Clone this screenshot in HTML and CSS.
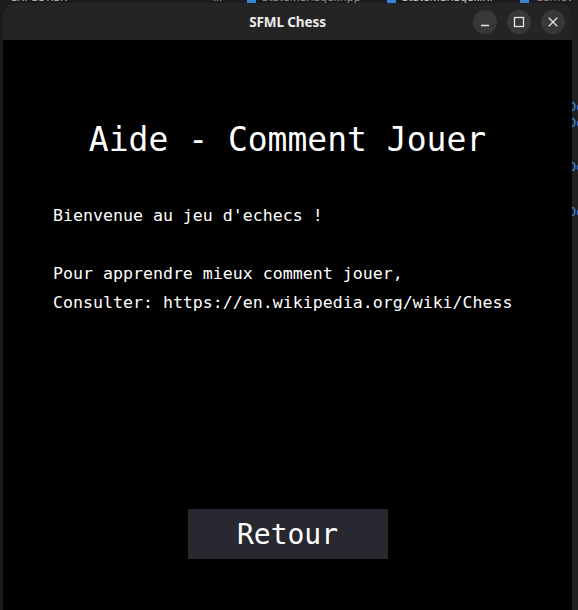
FILE: index.html
```html
<!DOCTYPE html>
<html lang="fr">
<head>
<meta charset="utf-8">
<title>SFML Chess</title>
<link rel="stylesheet" href="styles.css">
</head>
<body>
<div class="desktop">
  <div class="bg-tabs">
    <span class="bg-explorer">EXPLORER</span>
    <span class="bg-dots">...</span>
    <span class="bg-tab bg-tab1"><i class="bg-ico"></i>StateManager.hpp</span>
    <span class="bg-tab bg-tab2"><i class="bg-ico"></i>StateManager.inl</span>
    <span class="bg-close">×</span>
    <span class="bg-tab bg-tab3"><i class="bg-ico"></i>GameOver</span>
  </div>
  <div class="bg-code">
    <span class="bg-kw bg-kw1">Do</span>
    <span class="bg-kw bg-kw2">Do</span>
    <span class="bg-kw bg-kw3">Do</span>
    <span class="bg-kw bg-kw4">Do</span>
  </div>
  <div class="window">
    <header class="titlebar">
      <span class="title">SFML Chess</span>
      <div class="controls">
        <span class="ctl">
          <svg width="12" height="12" viewBox="0 0 12 12"><path d="M2 9.5h8" stroke="#e6e6e6" stroke-width="1.3" fill="none"/></svg>
        </span>
        <span class="ctl">
          <svg width="12" height="12" viewBox="0 0 12 12"><rect x="1.5" y="1.5" width="9" height="9" stroke="#e6e6e6" stroke-width="1.3" fill="none"/></svg>
        </span>
        <span class="ctl">
          <svg width="12" height="12" viewBox="0 0 12 12"><path d="M1.8 1.8l8.4 8.4M10.2 1.8l-8.4 8.4" stroke="#e6e6e6" stroke-width="1.3" fill="none"/></svg>
        </span>
      </div>
    </header>
    <main class="content">
      <h1 class="heading">Aide - Comment Jouer</h1>
      <div class="text">
        <p class="line">Bienvenue au jeu d'echecs !</p>
        <p class="line">&nbsp;</p>
        <p class="line">Pour apprendre mieux comment jouer,</p>
        <p class="line">Consulter: https://en.wikipedia.org/wiki/Chess</p>
      </div>
      <div class="btn-row">
        <button class="btn">Retour</button>
      </div>
    </main>
  </div>
</div>
</body>
</html>
```

FILE: styles.css
```css
* { box-sizing: border-box; }
html, body {
  margin: 0;
  padding: 0;
  width: 578px;
  height: 610px;
  overflow: hidden;
  background: #1b1b1b;
}
.desktop {
  position: relative;
  width: 578px;
  height: 610px;
  overflow: hidden;
  background: #1b1b1b;
}
.bg-tabs {
  position: absolute;
  left: 0;
  top: -10px;
  width: 578px;
  height: 14px;
  font-family: "Noto Sans", sans-serif;
  font-size: 11.5px;
  line-height: 14px;
  color: #8a8a8a;
}
.bg-tabs span { position: absolute; top: 0; white-space: nowrap; }
.bg-explorer { left: 11px; font-size: 11px; letter-spacing: 0.4px; color: #b8b8b8; }
.bg-dots { left: 213px; }
.bg-tab1 { left: 247px; }
.bg-tab2 { left: 387px; color: #c8c8c8; }
.bg-close { left: 498px; color: #c8c8c8; }
.bg-tab3 { left: 520px; }
.bg-ico {
  display: inline-block;
  width: 9px;
  height: 10px;
  background: #3b82d6;
  margin-right: 6px;
  vertical-align: middle;
}
.bg-code {
  position: absolute;
  left: 571px;
  top: 0;
  width: 10px;
  height: 610px;
  background: #1f1f1f;
}
.bg-kw {
  position: absolute;
  left: -2px;
  font-family: "DejaVu Sans Mono", monospace;
  font-size: 12px;
  color: #3f8ee8;
}
.bg-kw1 { top: 100px; }
.bg-kw2 { top: 116px; }
.bg-kw3 { top: 160px; }
.bg-kw4 { top: 205px; }
.window {
  position: absolute;
  left: 3px;
  top: 3px;
  width: 569px;
  height: 640px;
  background: #000;
  border-radius: 11px 11px 0 0;
  overflow: hidden;
  display: flex;
  flex-direction: column;
}
.titlebar {
  position: relative;
  height: 37px;
  flex: none;
  background: #242424;
  display: flex;
  align-items: center;
  justify-content: center;
}
.title {
  font-family: "Noto Sans", sans-serif;
  font-weight: 700;
  font-size: 13.5px;
  color: #ececec;
  letter-spacing: -0.1px;
}
.controls {
  position: absolute;
  right: 7px;
  top: 7px;
  display: flex;
  gap: 10px;
}
.ctl {
  width: 24px;
  height: 24px;
  border-radius: 50%;
  background: #383838;
  display: flex;
  align-items: center;
  justify-content: center;
}
.content {
  flex: 1;
  background: #000;
  color: #fff;
  font-family: "DejaVu Sans Mono", monospace;
  padding-top: 80px;
}
.heading {
  margin: 0;
  font-weight: 400;
  font-size: 33px;
  line-height: 40px;
  text-align: center;
}
.text {
  margin-top: 41px;
  padding-left: 50px;
  font-size: 16.6px;
  line-height: 29px;
}
.line {
  margin: 0;
  white-space: pre;
}
.btn-row {
  margin-top: 192px;
  display: flex;
  justify-content: center;
}
.btn {
  width: 200px;
  height: 50px;
  border: none;
  background: #282830;
  color: #fff;
  font-family: "DejaVu Sans Mono", monospace;
  font-size: 28px;
  padding: 0;
  margin: 0;
}
```
